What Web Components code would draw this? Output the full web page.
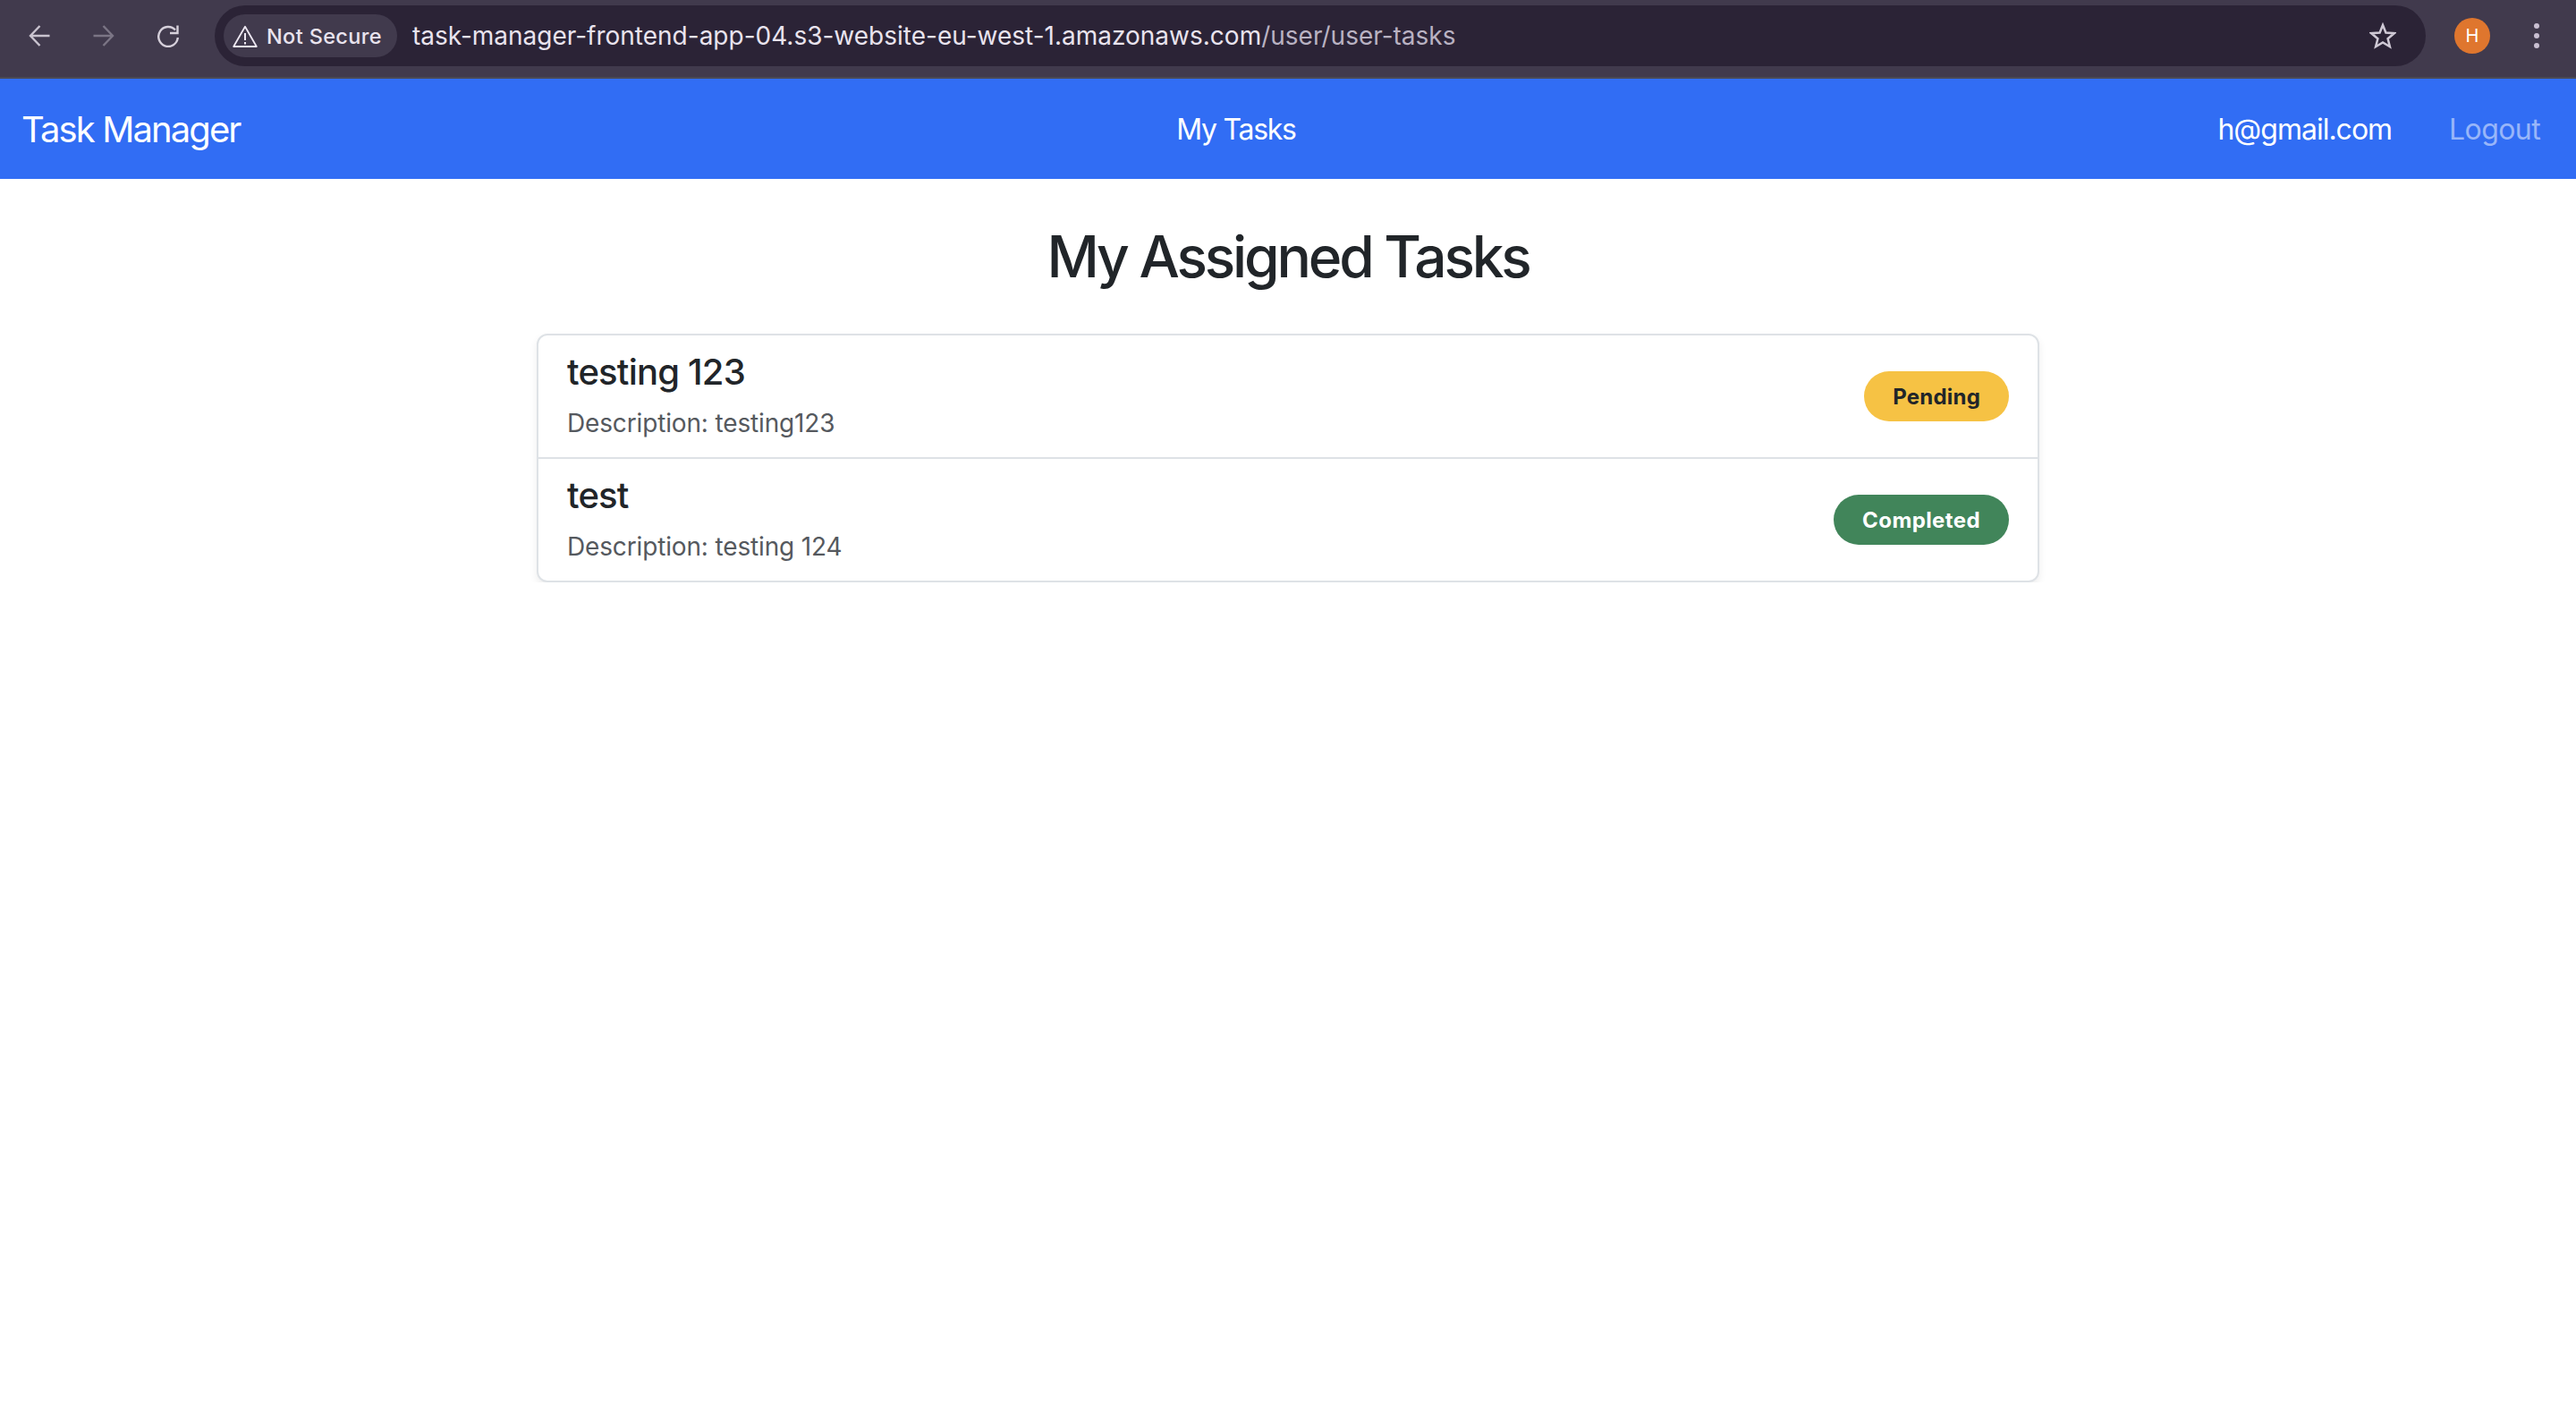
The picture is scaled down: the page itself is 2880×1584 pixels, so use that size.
<!DOCTYPE html>
<html lang="en">
<head>
<meta charset="utf-8">
<title>Task Manager</title>
<style>
html, body { margin: 0; padding: 0; background: #fff; }
body { font-family: Inter, "Liberation Sans", sans-serif; }
</style>
</head>
<body>
<browser-bar url-host="task-manager-frontend-app-04.s3-website-eu-west-1.amazonaws.com" url-path="/user/user-tasks"></browser-bar>
<app-nav>
  <span slot="brand">Task Manager</span>
  <span slot="center">My Tasks</span>
  <span slot="user">h@gmail.com</span>
  <span slot="logout">Logout</span>
</app-nav>
<task-page heading="My Assigned Tasks">
  <task-item name="testing 123" description="Description: testing123" status="Pending" kind="pending"></task-item>
  <task-item name="test" description="Description: testing 124" status="Completed" kind="done"></task-item>
</task-page>

<script>
const barTemplate = document.createElement('template');
barTemplate.innerHTML = `
<style>
:host {
  display: flex;
  align-items: center;
  height: 88px;
  box-sizing: border-box;
  padding-bottom: 6px;
  background: #413a4d;
  border-bottom: 2px solid #4a4a55;
  color: #e9e3ee;
  font-family: Inter, "Liberation Sans", sans-serif;
}
.nav {
  display: flex;
  align-items: center;
  gap: 48px;
  padding-left: 32px;
  width: 240px;
  box-sizing: border-box;
  flex: none;
}
svg { display: block; flex: none; }
#omni {
  flex: none;
  width: 2472px;
  height: 68px;
  border-radius: 34px;
  background: #2b2336;
  display: flex;
  align-items: center;
  padding: 0 33px 0 10px;
  box-sizing: border-box;
}
#chip {
  display: flex;
  align-items: center;
  gap: 10px;
  height: 48px;
  width: 194px;
  flex: none;
  box-sizing: border-box;
  padding-left: 10px;
  border-radius: 24px;
  background: #413a4d;
  font-size: 23.5px;
  font-weight: 500;
  letter-spacing: .35px;
  white-space: nowrap;
}
#url {
  margin-left: 17px;
  font-size: 28px;
  white-space: nowrap;
  flex: 1;
}
#url span { color: #b9b2c2; }
#avatar {
  width: 40px;
  height: 40px;
  margin-left: 32px;
  border-radius: 50%;
  background: #df762e;
  color: #fff;
  font-size: 20px;
  display: flex;
  align-items: center;
  justify-content: center;
  flex: none;
}
#menu { margin-left: 47px; }
</style>
<div class="nav">
  <svg width="24" height="24" viewBox="0 0 24 24" fill="none" stroke="#c9c3cf" stroke-width="2.400"><path d="M23.500 12H2.500M12.500 1 2 12l10.500 11"/></svg>
  <svg width="24" height="24" viewBox="0 0 24 24" fill="none" stroke="#7b7585" stroke-width="2.400"><path d="M.5 12h21M11.500 1 22 12 11.500 23"/></svg>
  <svg width="24" height="26" viewBox="0 0 24 26" fill="none" stroke="#d6d0db" stroke-width="2.400"><path d="M20 6.500A10.800 11 0 1 0 22.800 15"/><path d="M22.500 1.500v8.500h-8.500"/></svg>
</div>
<div id="omni">
  <div id="chip">
    <svg width="28" height="25" viewBox="0 0 28 25" fill="none"><path d="M14 1.800 26.800 24H1.200z" stroke="#eee8f2" stroke-width="1.800" stroke-linejoin="round"/><path d="M14 9v8M14 19v2.400" stroke="#eee8f2" stroke-width="2"/></svg>
    <span>Not Secure</span>
  </div>
  <div id="url"><slot></slot></div>
  <svg width="30" height="30" viewBox="0 0 30 30" fill="none"><path d="M15 3l3.400 8.500 9.300.7-7.100 6 2.300 9L15 22.400 7.100 27.200l2.300-9-7.100-6 9.300-.7z" stroke="#cfc9d5" stroke-width="2.500"/></svg>
</div>
<div id="avatar">H</div>
<svg id="menu" width="10" height="30" viewBox="0 0 10 30" fill="#c9bfd2"><circle cx="5" cy="4" r="3"/><circle cx="5" cy="15" r="3"/><circle cx="5" cy="26" r="3"/></svg>
`;

class BrowserBar extends HTMLElement {
  constructor() {
    super();
    this.attachShadow({mode: 'open'});
    this.shadowRoot.appendChild(barTemplate.content.cloneNode(true));
  }

  connectedCallback() {
    const url = this.shadowRoot.getElementById('url');
    url.textContent = this.getAttribute('url-host');
    const path = document.createElement('span');
    path.textContent = this.getAttribute('url-path');
    url.appendChild(path);
  }
}

const navTemplate = document.createElement('template');
navTemplate.innerHTML = `
<style>
:host {
  display: flex;
  justify-content: space-between;
  align-items: center;
  height: 112px;
  background: #316df4;
  color: #fff;
  padding: 0 40px 0 24px;
  font-size: 32px;
  font-family: Inter, "Liberation Sans", sans-serif;
}
#brand { font-size: 40px; letter-spacing: -1.9px; }
#center { margin-left: 16px; letter-spacing: -1.3px; }
#right { display: flex; gap: 64px; letter-spacing: -1px; }
#logout { color: rgba(255, 255, 255, .5); letter-spacing: -.6px; }
</style>
<div id="brand"><slot name="brand"></slot></div>
<div id="center"><slot name="center"></slot></div>
<div id="right">
  <div><slot name="user"></slot></div>
  <div id="logout"><slot name="logout"></slot></div>
</div>
`;

class AppNav extends HTMLElement {
  constructor() {
    super();
    this.attachShadow({mode: 'open'});
    this.shadowRoot.appendChild(navTemplate.content.cloneNode(true));
  }
}

const pageTemplate = document.createElement('template');
pageTemplate.innerHTML = `
<style>
:host {
  display: flex;
  flex-direction: column;
  align-items: center;
  color: #212529;
  font-family: Inter, "Liberation Sans", sans-serif;
}
h1 {
  margin: 48px 0;
  font-size: 64px;
  line-height: 77px;
  font-weight: 500;
  letter-spacing: -3.200px;
}
#list {
  width: 1680px;
  box-sizing: border-box;
  border: 2px solid #dee2e6;
  border-radius: 12px;
  box-shadow: 0 4px 8px rgba(0, 0, 0, .075);
  background: #fff;
}
</style>
<h1 id="heading"></h1>
<div id="list"><slot></slot></div>
`;

class TaskPage extends HTMLElement {
  constructor() {
    super();
    this.attachShadow({mode: 'open'});
    this.shadowRoot.appendChild(pageTemplate.content.cloneNode(true));
  }

  connectedCallback() {
    this.shadowRoot.getElementById('heading').textContent = this.getAttribute('heading');
  }
}

const itemTemplate = document.createElement('template');
itemTemplate.innerHTML = `
<style>
:host {
  display: flex;
  align-items: center;
  justify-content: space-between;
  height: 136px;
  padding: 0 32px;
  border-bottom: 2px solid #dee2e6;
}
:host(:last-of-type) { border-bottom: 0; }
#text { margin-bottom: 4px; }
#name {
  font-size: 40px;
  line-height: 48px;
  font-weight: 500;
  letter-spacing: -.8px;
  color: #212529;
  margin-bottom: 15px;
}
#description {
  font-size: 28px;
  line-height: 36px;
  letter-spacing: -.15px;
  color: #55595e;
}
#badge {
  height: 56px;
  padding: 0 32px;
  border-radius: 28px;
  display: flex;
  align-items: center;
  font-size: 24px;
  font-weight: 700;
}
#badge.pending { background: #f6c244; color: #212529; letter-spacing: .2px; }
#badge.done { background: #41855a; color: #fff; letter-spacing: .4px; }
</style>
<div id="text">
  <div id="name"></div>
  <div id="description"></div>
</div>
<div id="badge"></div>
`;

class TaskItem extends HTMLElement {
  constructor() {
    super();
    this.attachShadow({mode: 'open'});
    this.shadowRoot.appendChild(itemTemplate.content.cloneNode(true));
  }

  connectedCallback() {
    const root = this.shadowRoot;
    root.getElementById('name').textContent = this.getAttribute('name');
    root.getElementById('description').textContent = this.getAttribute('description');
    const badge = root.getElementById('badge');
    badge.textContent = this.getAttribute('status');
    badge.className = this.getAttribute('kind');
  }
}

window.customElements.define('browser-bar', BrowserBar);
window.customElements.define('app-nav', AppNav);
window.customElements.define('task-page', TaskPage);
window.customElements.define('task-item', TaskItem);
</script>
</body>
</html>
